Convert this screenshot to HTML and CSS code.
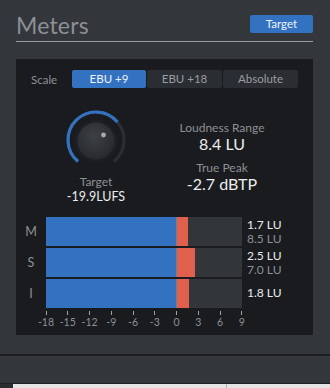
FILE: index.html
```html
<!DOCTYPE html>
<html>
<head>
<meta charset="utf-8">
<link rel="stylesheet" href="styles.css">
</head>
<body>
<div class="header">
  <div class="title">Meters</div>
  <button class="target-btn">Target</button>
</div>
<div class="panel">
  <div class="scale-row">
    <span class="scale-label">Scale</span>
    <div class="seg">
      <div class="seg-btn active">EBU +9</div>
      <div class="seg-btn">EBU +18</div>
      <div class="seg-btn">Absolute</div>
    </div>
  </div>
  <div class="info">
    <div class="knob-col">
      <svg class="knob" width="64" height="64" viewBox="0 0 64 64">
        <defs>
          <radialGradient id="kg" cx="45%" cy="38%" r="65%">
            <stop offset="0" stop-color="#3d4045"/>
            <stop offset="1" stop-color="#26282c"/>
          </radialGradient>
        </defs>
        <path d="M14 53.45 A28 28 0 1 1 50 53.45" fill="none" stroke="#2a2d31" stroke-width="3.2"/>
        <path d="M14 53.45 A28 28 0 1 1 53.45 14" fill="none" stroke="#3372c0" stroke-width="3.2"/>
        <circle cx="32" cy="33" r="21.5" fill="#1d1f23"/>
        <circle cx="32" cy="33" r="18.5" fill="url(#kg)"/>
        <circle cx="39.5" cy="27" r="2.4" fill="#a9a9a9"/>
      </svg>
      <div class="lbl">Target</div>
      <div class="val-sm">-19.9LUFS</div>
    </div>
    <div class="stats">
      <div class="lbl">Loudness Range</div>
      <div class="val-lg">8.4 LU</div>
      <div class="lbl gap">True Peak</div>
      <div class="val-lg">-2.7 dBTP</div>
    </div>
  </div>
  <div class="meters">
    <div class="row">
      <div class="ch">M</div>
      <div class="bar"><div class="blue"></div><div class="sep"></div><div class="red" style="width:11px"></div></div>
      <div class="vals"><div class="v1">1.7 LU</div><div class="v2">8.5 LU</div></div>
    </div>
    <div class="row">
      <div class="ch">S</div>
      <div class="bar"><div class="blue"></div><div class="sep"></div><div class="red" style="width:18px"></div></div>
      <div class="vals"><div class="v1">2.5 LU</div><div class="v2">7.0 LU</div></div>
    </div>
    <div class="row">
      <div class="ch">I</div>
      <div class="bar"><div class="blue"></div><div class="sep"></div><div class="red" style="width:12px"></div></div>
      <div class="vals single"><div class="v1">1.8 LU</div></div>
    </div>
    <div class="ticks">
      <div class="tick"><i></i><span>-18</span></div>
      <div class="tick"><i></i><span>-15</span></div>
      <div class="tick"><i></i><span>-12</span></div>
      <div class="tick"><i></i><span>-9</span></div>
      <div class="tick"><i></i><span>-6</span></div>
      <div class="tick"><i></i><span>-3</span></div>
      <div class="tick"><i></i><span>0</span></div>
      <div class="tick"><i></i><span>3</span></div>
      <div class="tick"><i></i><span>6</span></div>
      <div class="tick"><i></i><span>9</span></div>
    </div>
  </div>
</div>
<div class="footer"></div>
<div class="taskbar"><div class="tb-left"></div><div class="tb-main"></div><div class="tb-right"></div></div>
</body>
</html>
```
FILE: styles.css
```css
* { box-sizing: border-box; }
html, body { margin: 0; padding: 0; }
body {
  width: 330px;
  height: 388px;
  overflow: hidden;
  background: #33363b;
  font-family: Lato, "Open Sans", sans-serif;
  color: #e6e6e6;
}
.header {
  margin: 0 17px 0 16px;
  height: 42px;
  padding-top: 14px;
  display: flex;
  justify-content: space-between;
  align-items: flex-start;
  border-bottom: 1px solid #9b9d9f;
}
.title {
  font-size: 23px;
  line-height: 23px;
  color: #8d9094;
  letter-spacing: 0.2px;
}
.target-btn {
  margin-top: 1px;
  width: 63px;
  height: 18px;
  border: none;
  border-radius: 2px;
  background: #3372c0;
  color: #eef2f7;
  font-family: Lato, sans-serif;
  font-size: 11.5px;
  padding: 0;
  line-height: 18px;
}
.panel {
  margin: 17px 17px 0 16px;
  height: 276px;
  background: #191b1f;
  padding-top: 11px;
}
.scale-row {
  display: flex;
  align-items: center;
  height: 18px;
  padding-left: 15px;
}
.scale-label {
  width: 41px;
  font-size: 11.5px;
  color: #8d9094;
}
.seg {
  display: flex;
  gap: 1px;
}
.seg-btn {
  width: 75px;
  height: 18px;
  line-height: 18px;
  text-align: center;
  font-size: 11.5px;
  background: #2a2d31;
  color: #9a9da1;
  border-radius: 2px;
}
.seg-btn.active {
  width: 74px;
  background: #3372c0;
  color: #f0f3f7;
}
.info {
  display: flex;
  height: 129px;
}
.knob-col {
  width: 100px;
  margin-left: 30px;
  display: flex;
  flex-direction: column;
  align-items: center;
  padding-top: 20px;
}
.knob { display: block; }
.lbl {
  font-size: 12px;
  line-height: 15px;
  color: #8d9094;
}
.knob-col .lbl { margin-top: 2px; }
.val-sm {
  font-size: 12.5px;
  line-height: 15px;
  color: #ececec;
}
.stats {
  width: 120px;
  margin-left: 16px;
  padding-top: 32px;
  display: flex;
  flex-direction: column;
  align-items: center;
}
.val-lg {
  font-size: 16px;
  line-height: 18px;
  color: #ededed;
}
.stats .gap { margin-top: 7px; }
.meters {
  display: flex;
  flex-direction: column;
  gap: 2px;
}
.row {
  display: flex;
  height: 29px;
}
.ch {
  width: 30px;
  text-align: center;
  line-height: 29px;
  font-size: 12.5px;
  color: #8d9094;
}
.bar {
  width: 196px;
  height: 29px;
  background: #333639;
  display: flex;
}
.blue { width: 130px; background: #3372c0; }
.sep { width: 1px; background: #6f8191; }
.red { background: #e0604d; }
.vals {
  padding-left: 5px;
  padding-top: 1px;
  font-size: 12px;
  line-height: 14px;
}
.vals.single { padding-top: 7px; }
.v1 { color: #ececec; }
.v2 { color: #8d9094; }
.ticks {
  width: 196px;
  margin-left: 30px;
  margin-top: 1px;
  display: flex;
  justify-content: space-between;
}
.tick {
  width: 0;
  display: flex;
  flex-direction: column;
  align-items: center;
}
.tick i {
  display: block;
  width: 1px;
  height: 4px;
  background: #a0a2a5;
  flex: none;
}
.tick span {
  font-size: 10.5px;
  line-height: 12px;
  margin-top: 1px;
  color: #8d9094;
  white-space: nowrap;
}
.footer {
  margin-top: 19px;
  height: 30px;
  border-top: 2px solid #1c1e21;
  border-bottom: 1px solid #1c1e21;
}
.taskbar {
  display: flex;
  height: 4px;
}
.tb-left { width: 13px; background: #2a2d30; }
.tb-main { width: 214px; background: #e4e4e4; border-right: 1px solid #b5b5b5; }
.tb-right { flex: 1; background: #e4e4e4; }
```
